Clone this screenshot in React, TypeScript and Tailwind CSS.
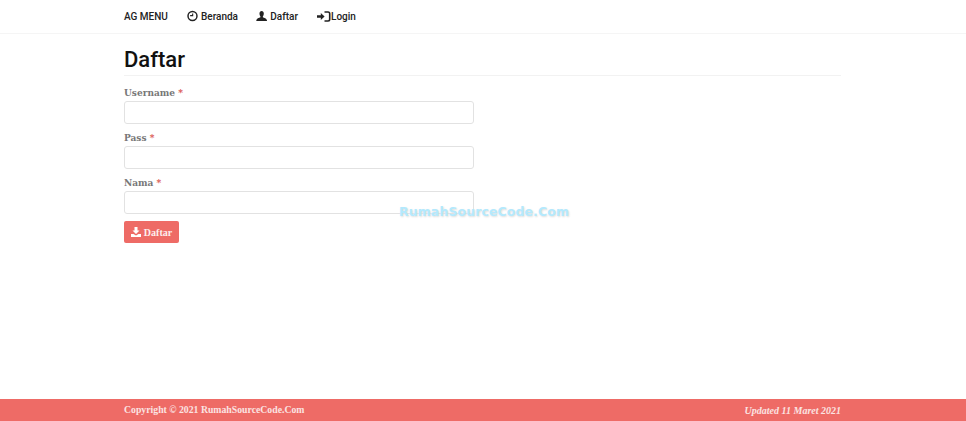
const serif = { fontFamily: '"Liberation Serif", serif' }

function Field({ label }: { label: string }) {
  return (
    <div className="mb-[7px]">
      <label className="block h-[15px] text-[9px] leading-[15px] font-bold text-[#777] font-['DejaVu_Serif',serif]">
        {label} <span className="text-[#d9534f]">*</span>
      </label>
      <input
        type="text"
        className="block h-[23px] w-[350px] rounded-[3px] border border-[#e2e2e2] bg-white"
      />
    </div>
  )
}

export default function App() {
  return (
    <div className="relative flex h-[421px] w-[966px] flex-col overflow-hidden bg-white">
      <nav className="h-[34px] border-b border-[#f5f5f5] bg-white">
        <div className="flex h-[33px] items-center pl-[124px] font-['Roboto',sans-serif] text-[10px] leading-[12px] font-medium text-[#222]">
          <span className="mt-[1px] mr-[18px] w-[45px] whitespace-nowrap">AG MENU</span>
          <span className="mr-[18px] flex w-[51px] items-center gap-[3px]">
            <svg className="-mt-[1px]" width="12" height="12" viewBox="0 0 12 12" fill="none" stroke="#222" strokeWidth="1.6">
              <circle cx="6" cy="6" r="4.9" />
              <path d="M3.4 5.6H6.2V3.2" strokeWidth="1.2" />
            </svg>
            <span className="mt-[1px]">Beranda</span>
          </span>
          <span className="mr-[19px] flex w-[42px] items-center gap-[3px]">
            <svg className="-mt-[1px]" width="12" height="12" viewBox="0 0 13 12" fill="#222">
              <path d="M4 3.2C4 1.5 5 .3 6.5.3S9 1.5 9 3.2C9 5 8.2 6.2 7.9 6.7V7.4C9.6 8 12.4 8.6 12.8 11.7H.2C.6 8.6 3.4 8 5.1 7.4V6.7C4.8 6.2 4 5 4 3.2Z" />
            </svg>
            <span className="mt-[1px]">Daftar</span>
          </span>
          <span className="flex items-center">
            <svg className="-mt-[1px]" width="14" height="11" viewBox="0 0 14 11" fill="none">
              <path d="M0 4.2H3.8V1.9L7.6 5.5L3.8 9.1V6.8H0Z" fill="#222" />
              <path d="M7.5 1H11C12 1 12.7 1.7 12.7 2.7V8.3C12.7 9.3 12 10 11 10H7.5" stroke="#222" strokeWidth="1.6" />
            </svg>
            <span className="mt-[1px]">Login</span>
          </span>
        </div>
      </nav>

      <main className="flex-1 pl-[124px]">
        <div className="w-[717px]">
          <h1 className="h-[42px] border-b border-[#f2f2f2] pt-[11px] font-['Roboto',sans-serif] text-[22px] leading-[30px] font-medium text-[#111]">
            Daftar
          </h1>
          <form className="pt-[10px]">
            <Field label="Username" />
            <Field label="Pass" />
            <Field label="Nama" />
            <button
              type="button"
              className="mt-[1px] flex h-[22px] w-[55px] items-center justify-center gap-[3px] rounded-[2px] bg-[#ee6b66] text-[10px] font-bold text-[#fdeeee]"
              style={serif}
            >
              <svg width="10" height="10" viewBox="0 0 10 10" fill="white">
                <path d="M3.5 0H6.5V3.5H8.5L5 7L1.5 3.5H3.5Z" />
                <path d="M0 7H2.5L5 8.5L7.5 7H10V10H0Z" />
              </svg>
              Daftar
            </button>
          </form>
        </div>
      </main>

      <footer className="flex h-[22px] items-center justify-between bg-[#ee6b66] pr-[125px] pl-[124px] text-[9.75px] font-bold text-[#fbe3e2]" style={serif}>
        <span>Copyright © 2021 RumahSourceCode.Com</span>
        <span className="text-[10px] italic">Updated 11 Maret 2021</span>
      </footer>

      <span className="absolute top-[203px] left-[399px] font-['DejaVu_Sans',sans-serif] text-[12.5px] font-bold tracking-[0.1px] text-[#b4e9fd] [text-shadow:1px_1px_2px_#ddd]">
        RumahSourceCode.Com
      </span>
    </div>
  )
}
